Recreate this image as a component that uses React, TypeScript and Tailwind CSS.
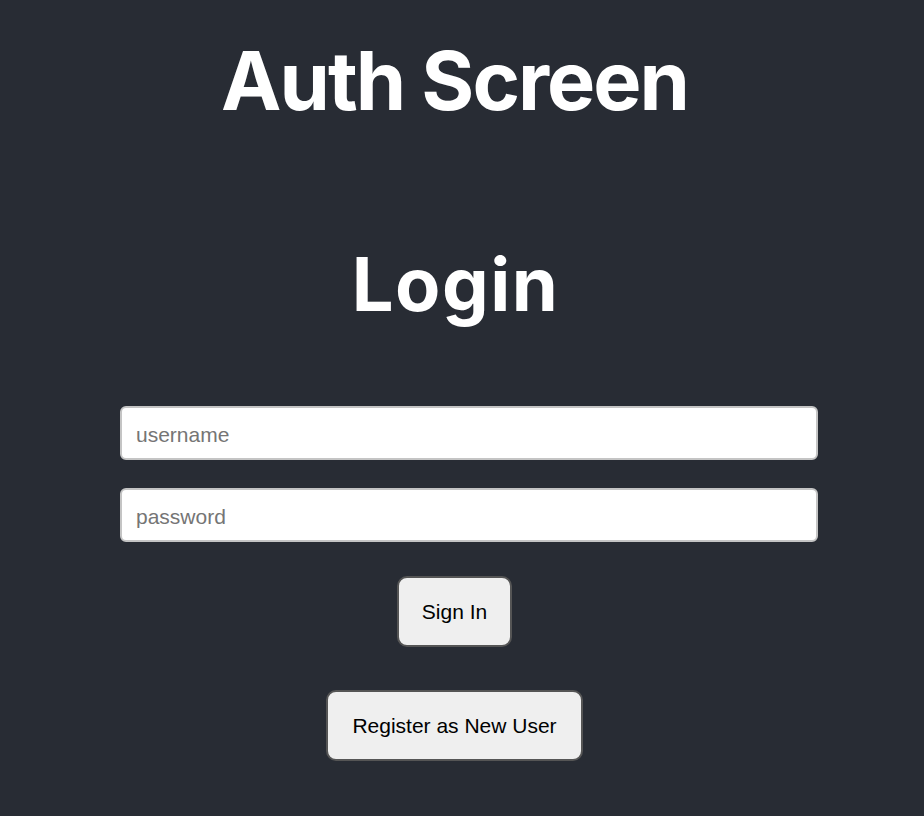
export default function App() {
  return (
    <div className="min-h-[816px] w-full bg-[#282c34] flex flex-col items-center pt-[41px] pr-[15px]">
      <h1 className="font-['Inter',sans-serif] font-bold text-white text-[81px] leading-none tracking-[-2px]">
        Auth Screen
      </h1>
      <h2 className="mt-[125px] font-['Inter',sans-serif] font-bold text-white text-[74px] leading-none tracking-[1.5px] pl-[2px]">
        Login
      </h2>
      <form className="mt-[85px] flex flex-col items-center w-full">
        <input
          type="text"
          placeholder="username"
          className="ml-[29px] w-[698px] h-[54px] rounded-[6px] border-2 border-[#c4c4c4] bg-white px-[14px] pt-[3px] font-['Liberation_Sans',Arial,sans-serif] text-[21px] text-black placeholder:text-[#757575] outline-none"
        />
        <input
          type="password"
          placeholder="password"
          className="ml-[29px] mt-[28px] w-[698px] h-[54px] rounded-[6px] border-2 border-[#c4c4c4] bg-white px-[14px] pt-[3px] font-['Liberation_Sans',Arial,sans-serif] text-[21px] text-black placeholder:text-[#757575] outline-none"
        />
        <button
          type="button"
          className="mt-[34px] h-[71px] px-[23px] rounded-[10px] border-2 border-[#555] bg-[#efefef] font-['Liberation_Sans',Arial,sans-serif] text-[21px] text-black"
        >
          Sign In
        </button>
        <button
          type="button"
          className="mt-[43px] h-[71px] px-[24px] rounded-[10px] border-2 border-[#555] bg-[#efefef] font-['Liberation_Sans',Arial,sans-serif] text-[21px] text-black"
        >
          Register as New User
        </button>
      </form>
    </div>
  );
}
